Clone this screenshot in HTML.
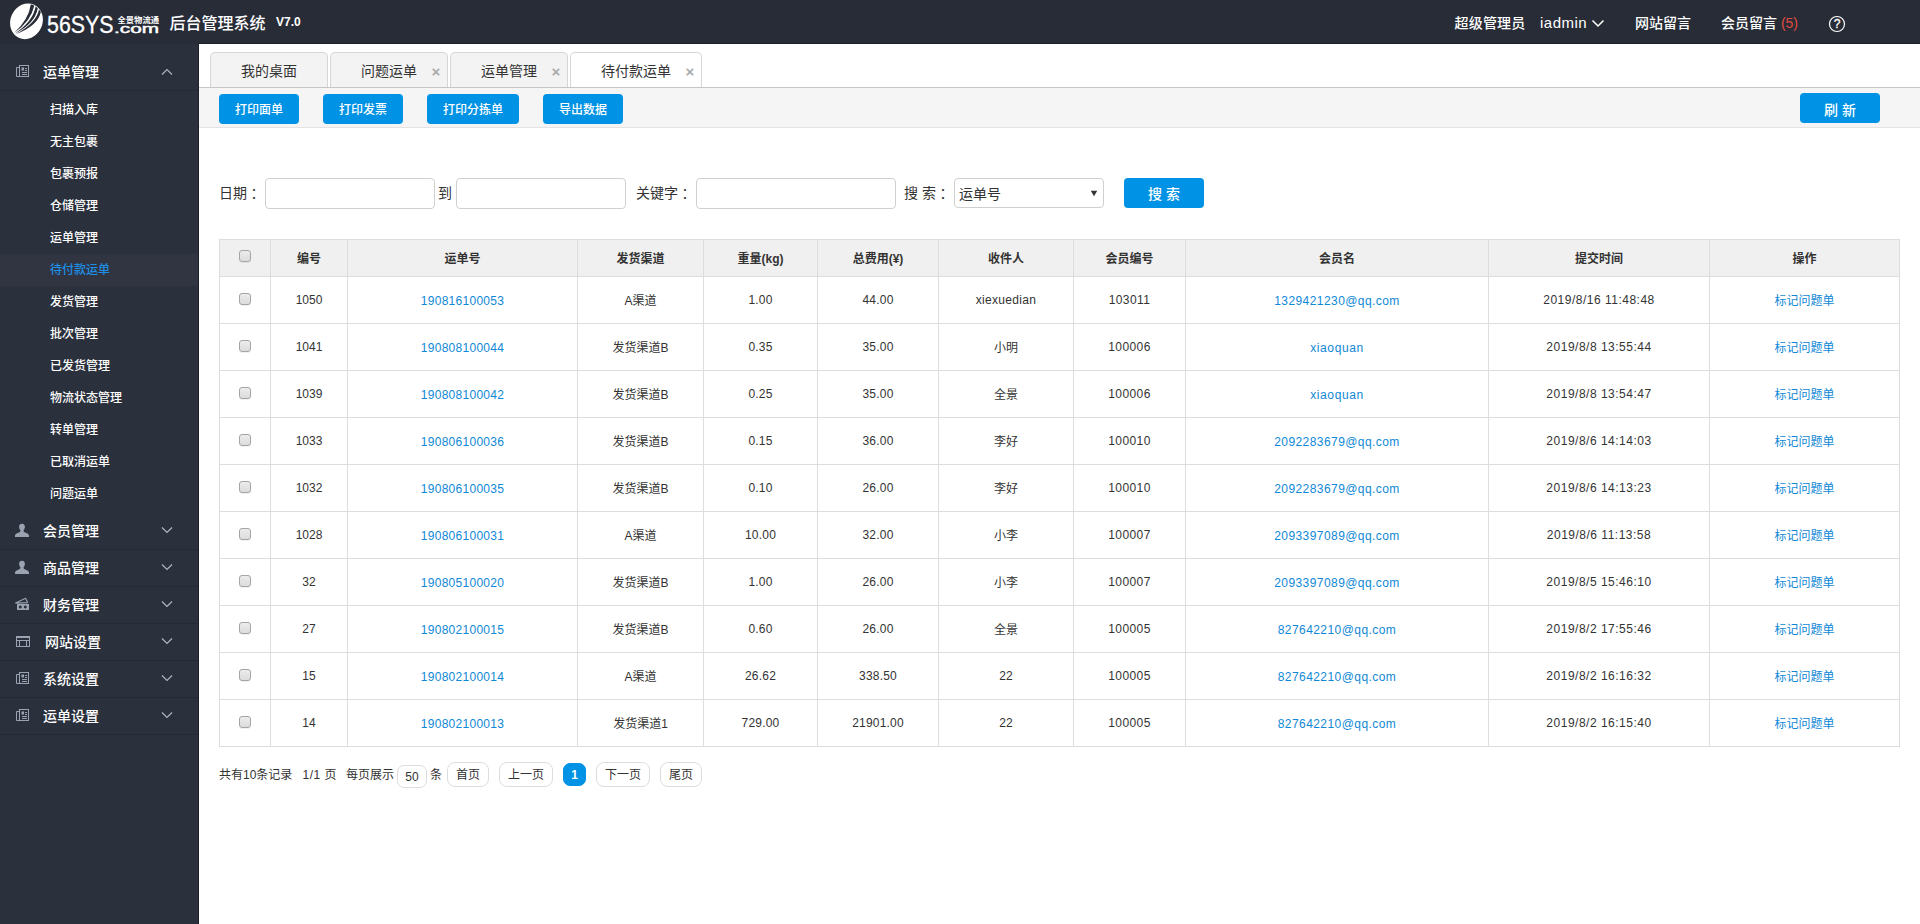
<!DOCTYPE html>
<html lang="zh-CN">
<head>
<meta charset="utf-8">
<title>后台管理系统</title>
<style>
*{box-sizing:border-box;margin:0;padding:0}
html,body{width:1920px;height:924px;overflow:hidden;background:#fff}
body{font-family:"Liberation Sans","Noto Sans CJK SC",sans-serif;font-size:12px;color:#333;position:relative}
a{text-decoration:none;color:inherit}
/* top bar */
#top{position:absolute;left:0;top:0;width:1920px;height:44px;background:#282c37;color:#fff;font-weight:500}
#topline{position:absolute;left:198px;top:43px;width:1722px;height:1px;background:#1c202c}
#top .title{position:absolute;left:169.500px;top:0;line-height:47px;font-size:16px;color:#fff;white-space:nowrap}
#top .ver{position:absolute;left:276px;top:0;line-height:45px;font-size:12px;color:#fff;font-weight:bold}
#top .nav{position:absolute;top:0;line-height:45px;font-size:14px;color:#fff;white-space:nowrap}
#logo{position:absolute;left:0;top:0}
/* sidebar */
#side{position:absolute;left:0;top:44px;width:199px;height:880px;font-weight:500;background:#2a303c;border-right:1px solid #1c202c;color:#fff}
#side .hd{position:absolute;left:0;width:198px;height:37px;border-bottom:1px solid #242935;line-height:37px;font-size:14px}
#side .hd span{position:absolute;left:43px;top:0}
#side .hd svg{position:absolute}
#side .sub{position:absolute;left:0;width:198px;height:32px;line-height:32px;font-size:12px}
#side .sub span{position:absolute;left:50px;top:0}
#side .sub.on{background:#303541;color:#1e8ee6}
/* main */
#main{position:absolute;left:199px;top:44px;width:1721px;height:880px;background:#fff}
.tab{position:absolute;top:8px;height:37px;border:1px solid #d6d6d6;border-bottom:none;border-radius:5px 5px 0 0;background:#f3f3f3;font-size:14px;line-height:37px;color:#333}
.tab span{position:absolute;top:0;white-space:nowrap}
.tab i{position:absolute;top:0;font-style:normal;color:#aaa;font-size:15px;font-weight:bold;line-height:37px;margin-left:5.500px}
.tab.on{background:#fff}
#tabline{position:absolute;left:0;top:43px;width:1721px;height:1px;background:#c6c6c6}
#bar{position:absolute;left:0;top:44px;width:1721px;height:40px;background:#f5f5f5;border-bottom:1px solid #e4e4e4}
.btn{position:absolute;font-weight:500;height:30px;border-radius:4px;background:#0092e4;color:#fff;font-size:12px;line-height:33px;text-align:center;white-space:nowrap;overflow:hidden}
.lbl{position:absolute;font-size:14px;line-height:20px;color:#333;white-space:nowrap}
.lbl b{font-weight:normal;margin-left:3.500px}
.inp{position:absolute;height:31px;border:1px solid #d0d0d0;border-radius:4px;background:#fff}
/* table */
table{position:absolute;left:20px;top:195px;border-collapse:collapse;table-layout:fixed;width:1681px}
th,td{border:1px solid #ddd;text-align:center;font-size:12px;color:#333;padding:0;vertical-align:middle;white-space:nowrap}
th{height:37px;background:#f0f0f0;font-weight:bold;padding-bottom:2px}
th .cb{top:-2px}
td{height:47px}
td a{color:#0f88d6;position:relative;top:1px}
td .c{position:relative;top:-1px}
td a.c{top:-1px}
td.n{letter-spacing:.2px}
td.m{letter-spacing:.4px}
td.d{letter-spacing:.5px}
td.r{letter-spacing:.3px}
td.o a{letter-spacing:.28px}
td.e a{letter-spacing:.43px}
td.x a{letter-spacing:.62px}
.cb{display:inline-block;width:12px;height:12px;border:1px solid #a5a5a5;border-radius:3px;background:linear-gradient(#ececec,#dcdcdc);vertical-align:middle;position:relative;top:-1.500px;box-shadow:0 1px 0 rgba(0,0,0,.06)}
/* pager */
.pg{position:absolute;top:720px;font-size:12px;line-height:22px;white-space:nowrap;color:#333}
.pb{position:absolute;top:718px;height:25px;border:1px solid #ddd;border-radius:8px;font-size:12px;line-height:25px;text-align:center;color:#333;background:#fff;white-space:nowrap}
.pb.on{background:#0092e4;border-color:#0092e4;color:#fff}
</style>
</head>
<body>
<div id="top">
  <svg id="logo" width="170" height="44" viewBox="0 0 170 44">
    <g transform="rotate(25 26.5 21.3)"><ellipse cx="26.5" cy="21.3" rx="16" ry="18.2" fill="#fff"/></g>
    <path d="M30.800 4.300Q29 19 14.300 32.800Q31 21.500 34.300 5.600Z" fill="#282c37"/>
    <path d="M35.600 6.600Q33 21.500 15 33.500Q35 23.500 37.800 8.200Z" fill="#282c37"/>
    <path d="M39 9.600Q36.500 23 15.800 34.200Q38.300 25.500 40.800 12Z" fill="#282c37"/>
    <text x="47" y="32.500" font-family="Liberation Sans, sans-serif" font-size="23" fill="#fff" stroke="#fff" stroke-width="0.300" textLength="66.500" lengthAdjust="spacingAndGlyphs">56SYS</text>
    <text x="114" y="32.500" font-family="Liberation Sans, sans-serif" font-size="13.500" fill="#fff" stroke="#fff" stroke-width="0.450" textLength="45" lengthAdjust="spacingAndGlyphs">.com</text>
    <text x="117.500" y="23.300" font-family="Liberation Sans, Noto Sans CJK SC, sans-serif" font-size="8.300" font-weight="bold" fill="#fff" textLength="41.500" lengthAdjust="spacingAndGlyphs">全景物流通</text>
  </svg>
  <div id="topline"></div>
  <div class="title">后台管理系统</div>
  <div class="ver">V7.0</div>
  <div class="nav" style="left:1454.500px;line-height:47px;letter-spacing:0.200px">超级管理员</div>
  <div class="nav" style="left:1540px;font-size:15px;letter-spacing:0.500px">iadmin</div>
  <svg style="position:absolute;left:1591px;top:18.500px" width="14" height="10" viewBox="0 0 14 10"><path d="M1.5 1.5 L7 7 L12.5 1.5" stroke="#fff" stroke-width="1.5" fill="none"/></svg>
  <div class="nav" style="left:1635px;line-height:47px">网站留言</div>
  <div class="nav" style="left:1721px;line-height:47px">会员留言 <span style="color:#e04a3f;position:relative;top:-0.500px">(5)</span></div>
  <svg style="position:absolute;left:1828px;top:15px" width="18" height="18" viewBox="0 0 18 18"><circle cx="9" cy="9" r="7.5" stroke="#fff" stroke-width="1.2" fill="none"/><text x="9" y="13" text-anchor="middle" font-family="Liberation Sans, sans-serif" font-size="12" fill="#fff" stroke="#fff" stroke-width="0.3">?</text></svg>
</div>

<div id="side">
  <div class="hd" style="top:10px"><svg style="left:15px;top:10px" width="15" height="14" viewBox="0 0 15 14"><g fill="none" stroke="#9ba3b3" stroke-width="1"><rect x="4.5" y="1.5" width="9" height="11"/><path d="M4.5 3.5H1.5V12.5H4.5"/><path d="M7 8.5H12M7 10.500H12M10 4.500H12M10 6.500H12"/></g><rect x="6.500" y="3.500" width="2.500" height="3" fill="#9ba3b3"/></svg><span style="left:43px">运单管理</span><svg style="left:161px;top:14px" width="12" height="8" viewBox="0 0 12 8"><path d="M1 6.500L6 1.500L11 6.500" fill="none" stroke="#aeb4c0" stroke-width="1.200"/></svg></div>
  <div class="sub" style="top:50px"><span>扫描入库</span></div>
  <div class="sub" style="top:82px"><span>无主包裹</span></div>
  <div class="sub" style="top:114px"><span>包裹预报</span></div>
  <div class="sub" style="top:146px"><span>仓储管理</span></div>
  <div class="sub" style="top:178px"><span>运单管理</span></div>
  <div class="sub on" style="top:210px"><span>待付款运单</span></div>
  <div class="sub" style="top:242px"><span>发货管理</span></div>
  <div class="sub" style="top:274px"><span>批次管理</span></div>
  <div class="sub" style="top:306px"><span>已发货管理</span></div>
  <div class="sub" style="top:338px"><span>物流状态管理</span></div>
  <div class="sub" style="top:370px"><span>转单管理</span></div>
  <div class="sub" style="top:402px"><span>已取消运单</span></div>
  <div class="sub" style="top:434px"><span>问题运单</span></div>
  <div class="hd" style="top:469px"><svg style="left:14px;top:10px" width="16" height="15" viewBox="0 0 16 15"><path d="M8 0.700C5.900 0.700 5 2.200 5.100 4.100C5.200 5.600 5.800 6.600 6.400 7.300C6.500 8.300 6.200 8.900 5.300 9.300L2.600 10.500C1.500 11 1 11.800 1 13V14H15V13C15 11.800 14.500 11 13.400 10.500L10.700 9.300C9.800 8.900 9.500 8.300 9.600 7.300C10.200 6.600 10.800 5.600 10.900 4.100C11 2.200 10.100 0.700 8 0.700Z" fill="#9ba3b3"/></svg><span style="left:43px">会员管理</span><svg style="left:161px;top:13px" width="12" height="8" viewBox="0 0 12 8"><path d="M1 1.500L6 6.500L11 1.500" fill="none" stroke="#aeb4c0" stroke-width="1.200"/></svg></div>
  <div class="hd" style="top:506px"><svg style="left:14px;top:10px" width="16" height="15" viewBox="0 0 16 15"><path d="M8 0.700C5.900 0.700 5 2.200 5.100 4.100C5.200 5.600 5.800 6.600 6.400 7.300C6.500 8.300 6.200 8.900 5.300 9.300L2.600 10.500C1.500 11 1 11.800 1 13V14H15V13C15 11.800 14.500 11 13.400 10.500L10.700 9.300C9.800 8.900 9.500 8.300 9.600 7.300C10.200 6.600 10.800 5.600 10.900 4.100C11 2.200 10.100 0.700 8 0.700Z" fill="#9ba3b3"/></svg><span style="left:43px">商品管理</span><svg style="left:161px;top:13px" width="12" height="8" viewBox="0 0 12 8"><path d="M1 1.500L6 6.500L11 1.500" fill="none" stroke="#aeb4c0" stroke-width="1.200"/></svg></div>
  <div class="hd" style="top:543px"><svg style="left:14px;top:10px" width="16" height="14" viewBox="0 0 16 14"><path d="M1.600 6.100L11.600 1.200L13.600 5.600Z" fill="none" stroke="#9ba3b3" stroke-width="1.100" stroke-linejoin="round"/><path d="M3 7H15V13H3Z M6.300 8.400a1.500 1.500 0 1 0 0.010 0Z M11.300 8.400a1.500 1.500 0 1 0 0.010 0Z" fill="#9ba3b3" fill-rule="evenodd"/></svg><span style="left:43px">财务管理</span><svg style="left:161px;top:13px" width="12" height="8" viewBox="0 0 12 8"><path d="M1 1.500L6 6.500L11 1.500" fill="none" stroke="#aeb4c0" stroke-width="1.200"/></svg></div>
  <div class="hd" style="top:580px"><svg style="left:15px;top:11px" width="16" height="14" viewBox="0 0 16 14"><g fill="none" stroke="#9ba3b3" stroke-width="1"><rect x="1.500" y="1.500" width="13" height="10"/><path d="M1.500 5.500H14.500M4.500 5.500V11.500M11.500 5.500V11.500"/></g><rect x="1" y="1" width="14" height="2" fill="#9ba3b3"/></svg><span style="left:45px">网站设置</span><svg style="left:161px;top:13px" width="12" height="8" viewBox="0 0 12 8"><path d="M1 1.500L6 6.500L11 1.500" fill="none" stroke="#aeb4c0" stroke-width="1.200"/></svg></div>
  <div class="hd" style="top:617px"><svg style="left:15px;top:10px" width="15" height="14" viewBox="0 0 15 14"><g fill="none" stroke="#9ba3b3" stroke-width="1"><rect x="4.5" y="1.5" width="9" height="11"/><path d="M4.5 3.5H1.5V12.5H4.5"/><path d="M7 8.5H12M7 10.500H12M10 4.500H12M10 6.500H12"/></g><rect x="6.500" y="3.500" width="2.500" height="3" fill="#9ba3b3"/></svg><span style="left:43px">系统设置</span><svg style="left:161px;top:13px" width="12" height="8" viewBox="0 0 12 8"><path d="M1 1.500L6 6.500L11 1.500" fill="none" stroke="#aeb4c0" stroke-width="1.200"/></svg></div>
  <div class="hd" style="top:654px"><svg style="left:15px;top:10px" width="15" height="14" viewBox="0 0 15 14"><g fill="none" stroke="#9ba3b3" stroke-width="1"><rect x="4.5" y="1.5" width="9" height="11"/><path d="M4.5 3.5H1.5V12.5H4.5"/><path d="M7 8.5H12M7 10.500H12M10 4.500H12M10 6.500H12"/></g><rect x="6.500" y="3.500" width="2.500" height="3" fill="#9ba3b3"/></svg><span style="left:43px">运单设置</span><svg style="left:161px;top:13px" width="12" height="8" viewBox="0 0 12 8"><path d="M1 1.500L6 6.500L11 1.500" fill="none" stroke="#aeb4c0" stroke-width="1.200"/></svg></div>
</div>

<div id="main">
  <div class="tab" style="left:11px;width:118px"><span style="left:30px">我的桌面</span></div>
  <div class="tab" style="left:131px;width:118px"><span style="left:30px">问题运单</span><i style="left:95px">×</i></div>
  <div class="tab" style="left:251px;width:118px"><span style="left:30px">运单管理</span><i style="left:95px">×</i></div>
  <div class="tab on" style="left:371px;width:132px"><span style="left:30px">待付款运单</span><i style="left:109px">×</i></div>
  <div id="tabline"></div>
  <div id="bar"></div>
  <div class="btn" style="left:20px;top:50px;width:80px">打印面单</div>
  <div class="btn" style="left:124px;top:50px;width:80px">打印发票</div>
  <div class="btn" style="left:228px;top:50px;width:92px">打印分拣单</div>
  <div class="btn" style="left:344px;top:50px;width:80px">导出数据</div>
  <div class="btn" style="left:1601px;top:49px;width:80px;font-size:14px;line-height:34px">刷 新</div>
  <div class="lbl" style="left:20px;top:139px">日期<b>：</b></div>
  <div class="inp" style="left:66px;top:134px;width:170px"></div>
  <div class="lbl" style="left:239px;top:139px">到</div>
  <div class="inp" style="left:257px;top:134px;width:170px"></div>
  <div class="lbl" style="left:437px;top:139px">关键字<b>：</b></div>
  <div class="inp" style="left:497px;top:134px;width:200px"></div>
  <div class="lbl" style="left:705px;top:139px">搜 索<b>：</b></div>
  <div class="inp" style="left:755px;top:134px;width:150px;height:30px"><span style="position:absolute;left:4px;top:0;line-height:31px;font-size:14px;color:#333">运单号</span><svg style="position:absolute;left:135px;top:10.500px" width="8" height="7" viewBox="0 0 8 7"><path d="M0.800 0.700H7.200L4 6.300Z" fill="#333"/></svg></div>
  <div class="btn" style="left:925px;top:134px;width:80px;font-size:14px;line-height:32px">搜 索</div>
  <table>
    <colgroup><col style="width:51px"><col style="width:77px"><col style="width:230px"><col style="width:126px"><col style="width:114px"><col style="width:121px"><col style="width:135px"><col style="width:112px"><col style="width:303px"><col style="width:221px"><col style="width:190px"></colgroup>
    <tr><th><i class="cb"></i></th><th>编号</th><th>运单号</th><th>发货渠道</th><th>重量(kg)</th><th>总费用(¥)</th><th>收件人</th><th>会员编号</th><th>会员名</th><th>提交时间</th><th>操作</th></tr>
    <tr><td><i class="cb"></i></td><td>1050</td><td class="o"><a>190816100053</a></td><td><span class="c">A渠道</span></td><td class="n">1.00</td><td class="n">44.00</td><td class="r">xiexuedian</td><td class="m">103011</td><td class="e"><a>1329421230@qq.com</a></td><td class="d">2019/8/16 11:48:48</td><td><a class="c">标记问题单</a></td></tr>
    <tr><td><i class="cb"></i></td><td>1041</td><td class="o"><a>190808100044</a></td><td><span class="c">发货渠道B</span></td><td class="n">0.35</td><td class="n">35.00</td><td><span class="c">小明</span></td><td class="m">100006</td><td class="x"><a>xiaoquan</a></td><td class="d">2019/8/8 13:55:44</td><td><a class="c">标记问题单</a></td></tr>
    <tr><td><i class="cb"></i></td><td>1039</td><td class="o"><a>190808100042</a></td><td><span class="c">发货渠道B</span></td><td class="n">0.25</td><td class="n">35.00</td><td><span class="c">全景</span></td><td class="m">100006</td><td class="x"><a>xiaoquan</a></td><td class="d">2019/8/8 13:54:47</td><td><a class="c">标记问题单</a></td></tr>
    <tr><td><i class="cb"></i></td><td>1033</td><td class="o"><a>190806100036</a></td><td><span class="c">发货渠道B</span></td><td class="n">0.15</td><td class="n">36.00</td><td><span class="c">李好</span></td><td class="m">100010</td><td class="e"><a>2092283679@qq.com</a></td><td class="d">2019/8/6 14:14:03</td><td><a class="c">标记问题单</a></td></tr>
    <tr><td><i class="cb"></i></td><td>1032</td><td class="o"><a>190806100035</a></td><td><span class="c">发货渠道B</span></td><td class="n">0.10</td><td class="n">26.00</td><td><span class="c">李好</span></td><td class="m">100010</td><td class="e"><a>2092283679@qq.com</a></td><td class="d">2019/8/6 14:13:23</td><td><a class="c">标记问题单</a></td></tr>
    <tr><td><i class="cb"></i></td><td>1028</td><td class="o"><a>190806100031</a></td><td><span class="c">A渠道</span></td><td class="n">10.00</td><td class="n">32.00</td><td><span class="c">小李</span></td><td class="m">100007</td><td class="e"><a>2093397089@qq.com</a></td><td class="d">2019/8/6 11:13:58</td><td><a class="c">标记问题单</a></td></tr>
    <tr><td><i class="cb"></i></td><td>32</td><td class="o"><a>190805100020</a></td><td><span class="c">发货渠道B</span></td><td class="n">1.00</td><td class="n">26.00</td><td><span class="c">小李</span></td><td class="m">100007</td><td class="e"><a>2093397089@qq.com</a></td><td class="d">2019/8/5 15:46:10</td><td><a class="c">标记问题单</a></td></tr>
    <tr><td><i class="cb"></i></td><td>27</td><td class="o"><a>190802100015</a></td><td><span class="c">发货渠道B</span></td><td class="n">0.60</td><td class="n">26.00</td><td><span class="c">全景</span></td><td class="m">100005</td><td class="e"><a>827642210@qq.com</a></td><td class="d">2019/8/2 17:55:46</td><td><a class="c">标记问题单</a></td></tr>
    <tr><td><i class="cb"></i></td><td>15</td><td class="o"><a>190802100014</a></td><td><span class="c">A渠道</span></td><td class="n">26.62</td><td class="n">338.50</td><td>22</td><td class="m">100005</td><td class="e"><a>827642210@qq.com</a></td><td class="d">2019/8/2 16:16:32</td><td><a class="c">标记问题单</a></td></tr>
    <tr><td><i class="cb"></i></td><td>14</td><td class="o"><a>190802100013</a></td><td><span class="c">发货渠道1</span></td><td class="n">729.00</td><td class="n">21901.00</td><td>22</td><td class="m">100005</td><td class="e"><a>827642210@qq.com</a></td><td class="d">2019/8/2 16:15:40</td><td><a class="c">标记问题单</a></td></tr>
  </table>
  <div class="pg" style="left:20px">共有10条记录</div>
  <div class="pg" style="left:103.500px;letter-spacing:0.500px">1/1 页</div>
  <div class="pg" style="left:147px">每页展示</div>
  <div class="pb" style="left:198px;top:721px;width:30px;height:23px;line-height:22px;border-radius:7px">50</div>
  <div class="pg" style="left:231px">条</div>
  <div class="pb" style="left:248px;top:718px;width:42px">首页</div>
  <div class="pb" style="left:300px;top:718px;width:54px">上一页</div>
  <div class="pb on" style="left:364px;top:719px;width:23px;height:23px;line-height:22px;font-weight:bold;border-radius:7px">1</div>
  <div class="pb" style="left:397px;top:718px;width:54px">下一页</div>
  <div class="pb" style="left:461px;top:718px;width:42px">尾页</div>
</div>
</body>
</html>
